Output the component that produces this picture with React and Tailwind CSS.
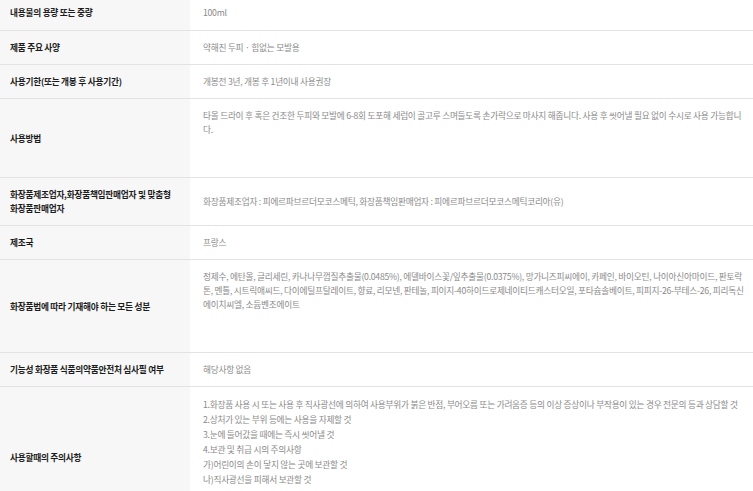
const rows = [
  { label: '내용물의 용량 또는 중량', value: ['100ml'], first: true },
  { label: '제품 주요 사양', value: ['약해진 두피 · 힘없는 모발용'] },
  { label: '사용기한(또는 개봉 후 사용기간)', value: ['개봉전 3년, 개봉 후 1년이내 사용권장'] },
  {
    label: '사용방법',
    value: [
      '타올 드라이 후 혹은 건조한 두피와 모발에 6-8회 도포해 세럼이 골고루 스며들도록 손가락으로 마사지 해줍니다. 사용 후 씻어낼 필요 없이 수시로 사용 가능합니다.',
    ],
    tall: true,
  },
  {
    label: '화장품제조업자,화장품책임판매업자 및 맞춤형 화장품판매업자',
    value: ['화장품제조업자 : 피에르파브르더모코스메틱, 화장품책임판매업자 : 피에르파브르더모코스메틱코리아(유)'],
  },
  { label: '제조국', value: ['프랑스'] },
  {
    label: '화장품법에 따라 기재해야 하는 모든 성분',
    value: [
      '정제수, 에탄올, 글리세린, 카나나무껍질추출물(0.0485%), 에델바이스꽃/잎추출물(0.0375%), 망가니즈피씨에이, 카페인, 바이오틴, 나이아신아마이드, 판토락톤, 멘톨, 시트릭애씨드, 다이에틸프탈레이트, 향료, 리모넨, 판테놀, 피이지-40하이드로제네이티드캐스터오일, 포타슘솔베이트, 피피지-26-부테스-26, 피리독신에이치씨엘, 소듐벤조에이트',
    ],
    tall: true,
  },
  { label: '기능성 화장품 식품의약품안전처 심사필 여부', value: ['해당사항 없음'] },
  {
    label: '사용할때의 주의사항',
    value: [
      '1.화장품 사용 시 또는 사용 후 직사광선에 의하여 사용부위가 붉은 반점, 부어오름 또는 가려움증 등의 이상 증상이나 부작용이 있는 경우 전문의 등과 상담할 것',
      '2.상처가 있는 부위 등에는 사용을 자제할 것',
      '3.눈에 들어갔을 때에는 즉시 씻어낼 것',
      '4.보관 및 취급 시의 주의사항',
      '가)어린이의 손이 닿지 않는 곳에 보관할 것',
      '나)직사광선을 피해서 보관할 것',
    ],
    tall: true,
    list: true,
  },
];

const InfoTable = () => {
  return (
    <div className="w-[753px] h-[491px] overflow-hidden bg-white font-['Noto_Sans_CJK_KR',sans-serif] text-[8.7px] leading-[14px] tracking-[-0.03em]">
      {rows.map((row, i) => (
        <div key={i} className="grid grid-cols-[190px_1fr] border-b border-[#e3e3e3]">
          <div
            className={`flex items-center bg-[#f7f7f7] pl-[10px] pr-2 font-bold text-[#1c1c1c] break-keep ${
              row.first ? 'pt-[6px] pb-[10px]' : 'pt-[10px] pb-[9px]'
            }`}
          >
            {row.label}
          </div>
          <div
            className={`pl-[13px] pr-[6px] text-[#8a8a8a] ${
              row.tall
                ? 'pt-[10px] pb-[40px]'
                : row.first
                ? 'flex items-center pt-[6px] pb-[10px]'
                : 'flex items-center pt-[10px] pb-[9px]'
            } ${row.list ? 'leading-[15px]' : ''}`}
          >
            <div>
              {row.value.map((line, j) => (
                <div key={j}>{line}</div>
              ))}
            </div>
          </div>
        </div>
      ))}
    </div>
  );
};

export default function App() {
  return <InfoTable />;
}
